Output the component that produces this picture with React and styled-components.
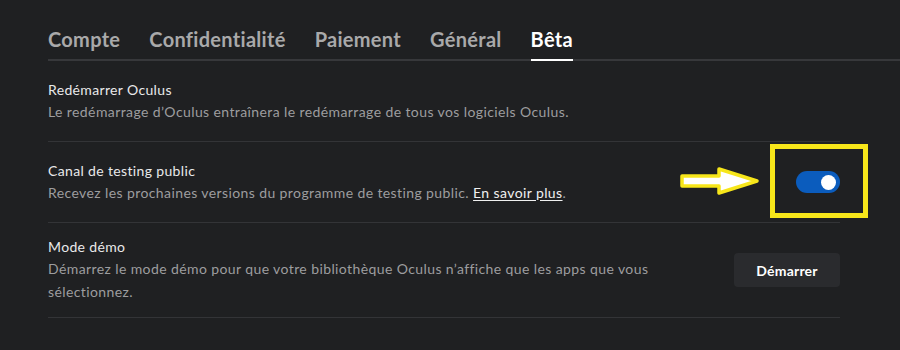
import React from "react";
import styled, { createGlobalStyle } from "styled-components";

const Global = createGlobalStyle`
  html, body { margin: 0; padding: 0; background: #1f2022; }
  body { font-family: "Segoe UI", Lato, "Open Sans", sans-serif; }
  * { box-sizing: border-box; }
`;

const Page = styled.div`
  width: 900px;
  height: 350px;
  background: #1f2022;
  overflow: hidden;
  padding-top: 25px;
`;

const TabBar = styled.nav`
  display: flex;
  gap: 29px;
  margin-left: 48px;
  border-bottom: 2px solid #37383b;
`;

const Tab = styled.div`
  font-size: 20px;
  line-height: 28px;
  font-weight: 700;
  letter-spacing: 0.3px;
  padding-bottom: 6px;
  margin-bottom: -2px;
  color: ${(p) => (p.$active ? "#ffffff" : "#a9a9aa")};
  border-bottom: 2px solid ${(p) => (p.$active ? "#ffffff" : "transparent")};
`;

const List = styled.div`
  width: 792px;
  margin-left: 48px;
`;

const Row = styled.div`
  position: relative;
  display: flex;
  align-items: center;
  justify-content: space-between;
  min-height: 81px;
  padding: 14px 0;
  border-bottom: 1px solid #333437;
`;

const Text = styled.div`
  display: flex;
  flex-direction: column;
  max-width: 640px;
`;

const Title = styled.div`
  font-size: 14px;
  line-height: 20px;
  letter-spacing: 0.35px;
  color: #e9e9ea;
`;

const Desc = styled.div`
  font-size: 14px;
  line-height: 23px;
  letter-spacing: 0.4px;
  color: #9d9d9f;
`;

const Link = styled.a`
  color: #f0f0f0;
  text-decoration: underline;
  text-underline-offset: 2px;
`;

const ToggleWrap = styled.div`
  position: relative;
  width: 44px;
  height: 22px;
`;

const Switch = styled.div`
  width: 44px;
  height: 22px;
  border-radius: 11px;
  background: #0b5cbd;
  display: flex;
  align-items: center;
  justify-content: flex-end;
  padding-right: 4px;
`;

const Knob = styled.div`
  width: 15px;
  height: 15px;
  border-radius: 50%;
  background: #ffffff;
`;

const Highlight = styled.div`
  position: absolute;
  left: -26px;
  right: -28px;
  top: -27px;
  bottom: -25px;
  border: 5px solid #f7e61a;
`;

const Arrow = styled.svg`
  position: absolute;
  left: -117px;
  top: -5px;
`;

const Button = styled.button`
  width: 106px;
  height: 34px;
  border: none;
  border-radius: 4px;
  background: #2a2b2e;
  color: #ffffff;
  font-family: inherit;
  font-size: 14px;
  font-weight: 700;
  letter-spacing: 0.2px;
`;

export default function App() {
  const tabs = ["Compte", "Confidentialité", "Paiement", "Général", "Bêta"];
  return (
    <>
      <Global />
      <Page>
        <TabBar>
          {tabs.map((t) => (
            <Tab key={t} $active={t === "Bêta"}>
              {t}
            </Tab>
          ))}
        </TabBar>
        <List>
          <Row>
            <Text>
              <Title>Redémarrer Oculus</Title>
              <Desc>
                Le redémarrage d’Oculus entraînera le redémarrage de tous vos logiciels Oculus.
              </Desc>
            </Text>
          </Row>
          <Row>
            <Text>
              <Title>Canal de testing public</Title>
              <Desc>
                Recevez les prochaines versions du programme de testing public.{" "}
                <Link>En savoir plus</Link>.
              </Desc>
            </Text>
            <ToggleWrap>
              <Switch>
                <Knob />
              </Switch>
              <Highlight />
              <Arrow width="82" height="30" viewBox="0 0 82 30">
                <polygon
                  points="3,10 40,10 40,3 78,15 40,27 40,20 3,20"
                  fill="#ffffff"
                  stroke="#f7e61a"
                  strokeWidth="3.5"
                  strokeLinejoin="round"
                />
              </Arrow>
            </ToggleWrap>
          </Row>
          <Row>
            <Text>
              <Title>Mode démo</Title>
              <Desc>
                Démarrez le mode démo pour que votre bibliothèque Oculus n’affiche que les apps que vous sélectionnez.
              </Desc>
            </Text>
            <Button>Démarrer</Button>
          </Row>
        </List>
      </Page>
    </>
  );
}
